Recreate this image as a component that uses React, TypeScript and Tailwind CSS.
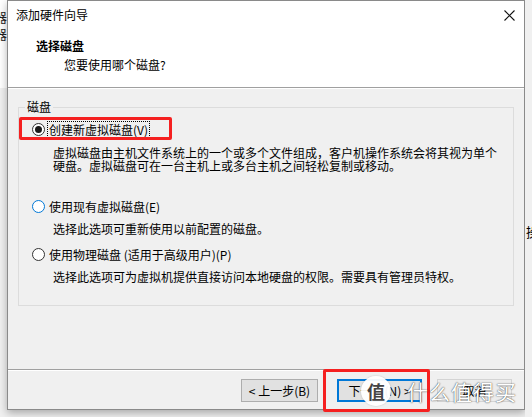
import React from "react";

function Radio({ state }: { state: "checked" | "hover" | "normal" }) {
  const ring =
    state === "hover" ? "border-[#0078d7]" : "border-[#333333]";
  return (
    <span
      className={`w-[13px] h-[13px] rounded-full border bg-white flex items-center justify-center shrink-0 ${ring}`}
    >
      {state === "checked" && (
        <span className="w-[7px] h-[7px] rounded-full bg-[#1a1a1a]" />
      )}
    </span>
  );
}

export default function App() {
  return (
    <div className="w-[532px] h-[417px] bg-[#f0f0f0] relative overflow-hidden flex items-start font-['Noto_Sans_CJK_SC','Microsoft_YaHei',sans-serif] text-[12px] text-black">
      {/* left background strip */}
      <div className="w-[7px] h-[417px] flex flex-col overflow-hidden shrink-0">
        <div className="h-[88px] bg-white overflow-hidden">
          <div className="-ml-[6px] mt-[8px] leading-[17px] text-[13px] text-[#222]">
            <div>器</div>
            <div>器</div>
          </div>
        </div>
        <div className="flex-1 bg-[#f0f0f0]" />
      </div>

      {/* dialog */}
      <div className="w-[518px] h-[410px] shrink-0 border border-[#8a8a8a] bg-[#f0f0f0] flex flex-col shadow-[0_3px_8px_rgba(0,0,0,0.3)]">
        {/* header */}
        <div className="h-[86px] bg-white flex flex-col">
          <div className="h-[28px] flex items-center justify-between pl-[8px] pr-[9px]">
            <span className="leading-[16px]">添加硬件向导</span>
            <svg width="11" height="11" viewBox="0 0 11 11">
              <path d="M0.5 0.5 L10.5 10.5 M10.5 0.5 L0.5 10.5" stroke="#111" strokeWidth="1.1" />
            </svg>
          </div>
          <div className="mt-[9px] pl-[28px] font-bold leading-[16px]">选择磁盘</div>
          <div className="mt-[3px] pl-[56px] leading-[16px]">您要使用哪个磁盘?</div>
        </div>
        <div className="h-px bg-[#a0a0a0]" />
        <div className="h-px bg-white" />

        {/* body */}
        <div className="flex-1 pt-[10px]">
          <fieldset className="mx-[10px] border border-[#dcdcdc] pb-[22px]">
            <legend className="ml-[6px] px-[2px] leading-[16px]">磁盘</legend>
            <div className="mt-[5px] h-[18px] flex items-center pl-[13px]">
              <Radio state="checked" />
              <span className="ml-[2px] px-[1px] border border-dotted border-black leading-[15px]">
                创建新虚拟磁盘(V)
              </span>
            </div>
            <div className="mt-[8px] pl-[34px] leading-[13px]">
              <div>虚拟磁盘由主机文件系统上的一个或多个文件组成，客户机操作系统会将其视为单个</div>
              <div>硬盘。虚拟磁盘可在一台主机上或多台主机之间轻松复制或移动。</div>
            </div>
            <div className="mt-[25px] h-[18px] flex items-center pl-[13px]">
              <Radio state="hover" />
              <span className="ml-[2px] px-[1px] border border-transparent leading-[15px]">
                使用现有虚拟磁盘(E)
              </span>
            </div>
            <div className="mt-[7px] pl-[34px] leading-[13px]">
              选择此选项可重新使用以前配置的磁盘。
            </div>
            <div className="mt-[10px] h-[18px] flex items-center pl-[13px]">
              <Radio state="normal" />
              <span className="ml-[2px] px-[1px] border border-transparent leading-[15px]">
                使用物理磁盘 (适用于高级用户)(P)
              </span>
            </div>
            <div className="mt-[7px] pl-[34px] leading-[13px]">
              选择此选项可为虚拟机提供直接访问本地硬盘的权限。需要具有管理员特权。
            </div>
          </fieldset>
        </div>

        {/* footer */}
        <div className="h-px bg-[#a0a0a0]" />
        <div className="h-px bg-white" />
        <div className="pt-[8px] pb-[7px] pr-[12px] flex justify-end">
          <button className="w-[77px] h-[23px] bg-[#e1e1e1] border border-[#adadad] leading-[16px]">
            &lt; 上一步(B)
          </button>
          <button className="ml-[19px] w-[85px] h-[23px] bg-[#e1e1e1] border-2 border-[#0078d7] leading-[16px]">
            下一步(N) &gt;
          </button>
          <button className="ml-[15px] w-[75px] h-[23px] bg-[#ececec] border border-[#d4d4d4] leading-[16px]">
            取消
          </button>
        </div>
      </div>

      {/* right background strip */}
      <div className="flex-1 h-[417px] overflow-hidden bg-[#f0f0f0]">
        <div className="mt-[224px] ml-[1px] leading-[16px] text-[13px] whitespace-nowrap">操</div>
      </div>

      {/* annotations: red boxes */}
      <div className="absolute left-[19px] top-[117px] w-[153px] h-[23px] border-[3px] border-[#f52020] rounded-[2px]" />
      <div className="absolute left-[323px] top-[369px] w-[107px] h-[43px] border-[3px] border-[#f52020] rounded-[2px]" />

      {/* watermark */}
      <div className="absolute left-[361px] top-[376px] flex items-center">
        <div className="w-[30px] h-[30px] rounded-full bg-white/95 flex items-center justify-center text-[18px] font-bold text-[#444] leading-none [box-shadow:0_0_2px_rgba(0,0,0,0.2)]">
          值
        </div>
        <div className="ml-[16px] text-[21px] leading-[30px] text-white tracking-[1px] [text-shadow:0_0_1px_rgba(0,0,0,0.7),0_0_2px_rgba(0,0,0,0.4)]">
          什么值得买
        </div>
      </div>
    </div>
  );
}
